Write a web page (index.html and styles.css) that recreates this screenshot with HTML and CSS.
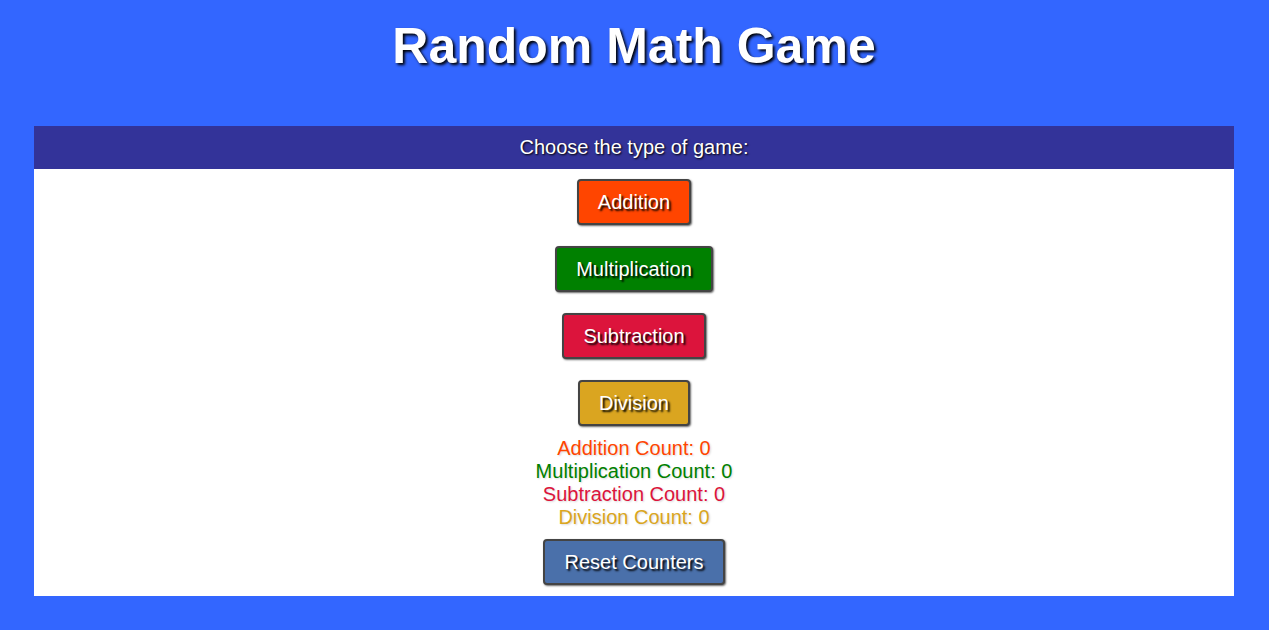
FILE: index.html
```html
<!DOCTYPE html>
<html lang="en">
<head>
<meta charset="utf-8">
<title>Random Math Game</title>
<link rel="stylesheet" href="styles.css">
</head>
<body>
  <h1 class="title">Random Math Game</h1>
  <main class="panel">
    <div class="panel-head">Choose the type of game:</div>
    <div class="panel-body">
      <div class="games">
        <button class="btn btn-add">Addition</button>
        <button class="btn btn-mul">Multiplication</button>
        <button class="btn btn-sub">Subtraction</button>
        <button class="btn btn-div">Division</button>
      </div>
      <div class="counts">
        <div class="count count-add">Addition Count: 0</div>
        <div class="count count-mul">Multiplication Count: 0</div>
        <div class="count count-sub">Subtraction Count: 0</div>
        <div class="count count-div">Division Count: 0</div>
      </div>
      <button class="btn btn-reset">Reset Counters</button>
    </div>
  </main>
</body>
</html>
```
FILE: styles.css
```css
html, body {
  margin: 0;
  padding: 0;
}

body {
  background: #3366ff;
  font-family: "Liberation Sans", Arial, sans-serif;
  padding: 16px 35px 34px 34px;
  min-height: 630px;
  box-sizing: border-box;
}

.title {
  margin: 0;
  color: #ffffff;
  font-size: 50px;
  font-weight: bold;
  text-align: center;
  line-height: 60px;
  text-shadow: 2px 2px 3px #000000;
}

.panel {
  margin-top: 50px;
  background: #ffffff;
}

.panel-head {
  background: #333399;
  color: #ffffff;
  font-size: 20px;
  height: 43px;
  line-height: 43px;
  text-align: center;
  text-shadow: 1px 1px 2px #000000;
}

.panel-body {
  display: flex;
  flex-direction: column;
  align-items: center;
  padding: 10px 0 11px;
}

.games {
  display: flex;
  flex-direction: column;
  align-items: center;
  gap: 21px;
}

.btn {
  font-family: "Liberation Sans", Arial, sans-serif;
  font-size: 20px;
  line-height: 22px;
  color: #ffffff;
  padding: 10px 19px;
  border: 2px solid #444444;
  border-radius: 4px;
  box-shadow: 1px 1px 2px rgba(0, 0, 0, 0.6);
  text-shadow: 2px 2px 2px #000000;
  cursor: pointer;
}

.btn-add { background: #ff4500; }
.btn-mul { background: #008000; }
.btn-sub { background: #dc143c; }
.btn-div { background: #daa520; }
.btn-reset {
  background: #4a70aa;
  padding: 10px 20px;
  margin-top: 10px;
}

.counts {
  margin-top: 11px;
  text-align: center;
  font-size: 20px;
  line-height: 23px;
}

.count { text-shadow: 1px 1px 2px rgba(0, 0, 0, 0.15); }
.count-add { color: #ff4500; }
.count-mul { color: #008000; }
.count-sub { color: #dc143c; }
.count-div { color: #daa520; }
```
